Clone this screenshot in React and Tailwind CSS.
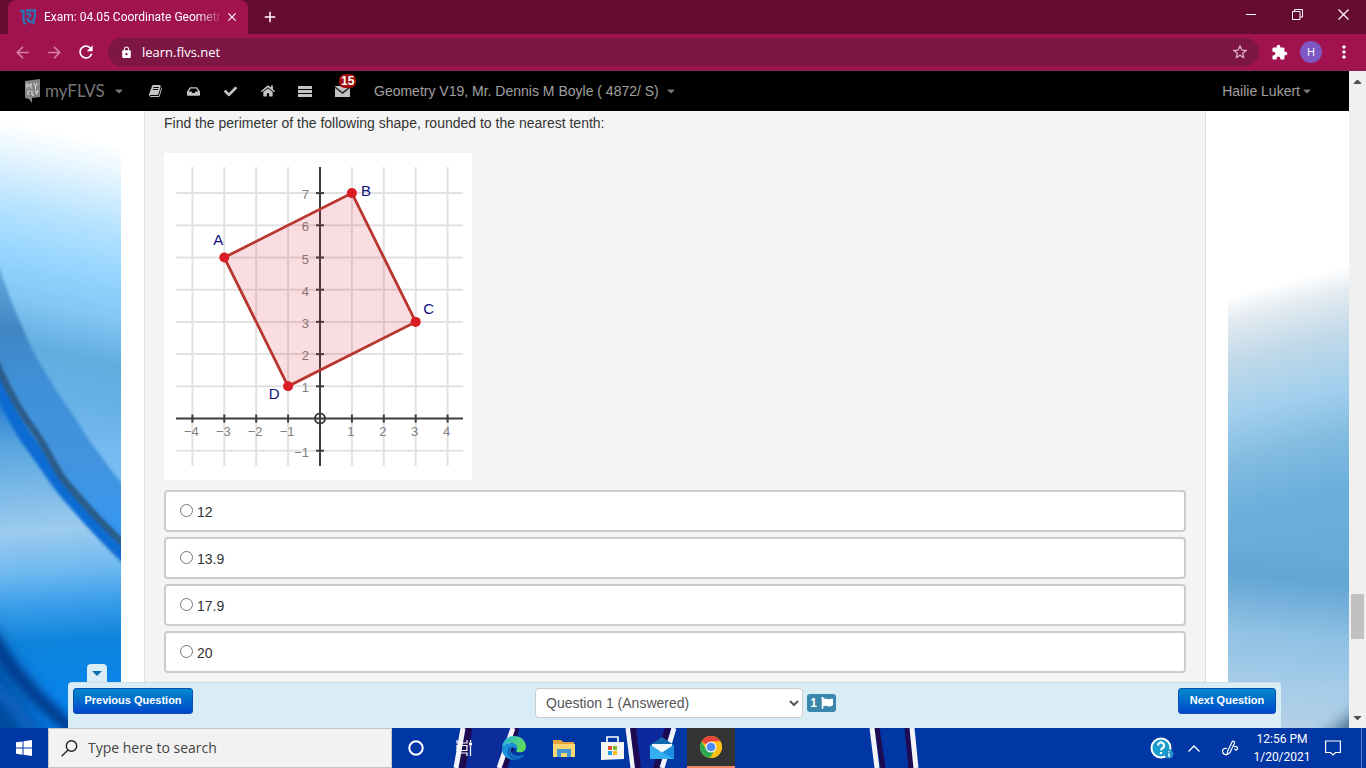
import React, { useState } from 'react'
import { FaInbox, FaCheck, FaHome, FaEnvelope, FaFlag, FaCaretDown, FaCaretUp } from 'react-icons/fa'
import {
  MdArrowBack,
  MdArrowForward,
  MdRefresh,
  MdLock,
  MdStarBorder,
  MdExtension,
  MdMoreVert,
  MdClose,
  MdAdd,
} from 'react-icons/md'

const ANSWERS = ['12', '13.9', '17.9', '20']

// Graph scale: origin in svg units and pixels per grid unit
const OX = 156
const OY = 265.5
const UX = 31.9
const UY = 32.2
const px = (x) => OX + x * UX
const py = (y) => OY - y * UY

const POINTS = [
  { name: 'A', x: -3, y: 5, dx: -6, dy: -13 },
  { name: 'B', x: 1, y: 7, dx: 14, dy: 3 },
  { name: 'C', x: 3, y: 3, dx: 13, dy: -8 },
  { name: 'D', x: -1, y: 1, dx: -14, dy: 13 },
]

function TabStrip() {
  return (
    <div className="flex h-[34px] shrink-0 items-stretch bg-[#660b30] pl-2 text-white">
      <div className="flex w-[240px] items-center rounded-t-lg bg-[#a0134f] pr-2 pl-3">
        <svg width="16" height="16" viewBox="0 0 16 16" className="mr-2 shrink-0" fill="none" stroke="#2a74b4" strokeWidth="2.4">
          <path d="M0 2h3.500v9c0 2 .5 3 2.500 4M6 1.500h9v8M6 5.500c3-2 6 0 3 3M7 9c1 3 3 4 5 4M13.500 9v6" />
        </svg>
        <span className="flex-1 mask-r-from-85% font-['Roboto',sans-serif] text-xs leading-4 whitespace-nowrap">
          Exam: 04.05 Coordinate Geometr
        </span>
        <button aria-label="Close tab" className="flex w-4 justify-center">
          <MdClose size={14} />
        </button>
      </div>
      <button aria-label="New tab" className="ml-3 flex w-5 items-center justify-center">
        <MdAdd size={18} />
      </button>
      <div className="flex-1" />
      <button aria-label="Minimize" className="flex w-[46px] items-center justify-center pb-1.5">
        <svg width="10" height="10" stroke="currentColor">
          <path d="M0 5.500h10" />
        </svg>
      </button>
      <button aria-label="Restore" className="flex w-[46px] items-center justify-center pb-1.5">
        <svg width="11" height="11" fill="none" stroke="currentColor">
          <path d="M.5 2.500h7.500v8H.5zM2.500 2.500v-2h8v7.500H8" />
        </svg>
      </button>
      <button aria-label="Close" className="flex w-[46px] items-center justify-center pb-1.5">
        <svg width="11" height="11" stroke="currentColor" strokeWidth="1.2">
          <path d="M.5.5l10 10M10.500.5l-10 10" />
        </svg>
      </button>
    </div>
  )
}

function Toolbar() {
  return (
    <div className="flex h-[37px] shrink-0 items-center border-b border-[#8a2450] bg-[#a0134f] px-3 text-white">
      <button aria-label="Back" className="flex w-5 justify-center text-[#d680a4]">
        <MdArrowBack size={19} />
      </button>
      <button aria-label="Forward" className="ml-3 flex w-5 justify-center text-[#d680a4]">
        <MdArrowForward size={19} />
      </button>
      <button aria-label="Reload" className="ml-3 flex w-5 justify-center">
        <MdRefresh size={20} />
      </button>
      <div className="ml-3 flex h-7 flex-1 items-center rounded-full bg-[#7d1644] pr-2.5 pl-3">
        <MdLock size={13} />
        <input
          aria-label="Address"
          defaultValue="learn.flvs.net"
          className="ml-2 flex-1 bg-transparent pl-px text-[13px] leading-5 outline-none"
        />
        <button aria-label="Bookmark">
          <MdStarBorder size={18} className="text-[#e2b8ca]" />
        </button>
      </div>
      <button aria-label="Extensions" className="ml-3">
        <MdExtension size={17} />
      </button>
      <button className="ml-3 h-[22px] w-[22px] rounded-full bg-[#7e57c2] text-[11px]">H</button>
      <button aria-label="Menu" className="ml-3 flex w-5 justify-center">
        <MdMoreVert size={20} />
      </button>
    </div>
  )
}

function BookIcon() {
  return (
    <svg width="14" height="14" viewBox="0 0 1792 1792" fill="currentColor">
      <path d="M1639 478q40 57 18 129l-275 906q-19 64-76.500 107.500t-122.500 43.500h-923q-77 0-148.500-53.500t-99.500-131.500q-24-67-2-127 0-4 3-27t4-37q1-8-3-21.500t-3-19.500q2-11 8-21t16.500-23.500 16.500-23.500q23-38 45-91.500t30-91.500q3-10 .5-30t-.5-28q3-11 17-28t17-23q21-36 42-92t25-90q1-9-2.500-32t.5-28q4-13 22-30.500t22-22.500q19-26 42.500-84.500t27.500-96.500q1-8-3-25.500t-2-26.500q2-8 9-18t18-23 17-21q8-12 16.500-30.500t15-35 16-36 19.500-32 26.500-23.500 36-11.500 47.500 5.500l-1 3q38-9 51-9h761q74 0 114 56t18 130l-274 906q-36 119-71.500 153.500t-128.500 34.500h-869q-27 0-38 15-11 16-1 43 24 70 144 70h923q29 0 56-15.500t35-41.500l300-987q7-22 5-57 38 15 59 43zm-1064 2q-4 13 2 22.500t20 9.500h608q13 0 25.500-9.500t16.500-22.500l21-64q4-13-2-22.500t-20-9.500h-608q-13 0-25.500 9.500t-16.500 22.500zm-83 256q-4 13 2 22.500t20 9.500h608q13 0 25.500-9.500t16.500-22.500l21-64q4-13-2-22.500t-20-9.500h-608q-13 0-25.500 9.500t-16.500 22.500z" />
    </svg>
  )
}

function NavBar() {
  return (
    <nav className="flex h-10 shrink-0 items-center bg-black pr-9 pl-6 font-['Liberation_Sans',sans-serif] text-sm text-[#a0a0a0]">
      <a href="#home" className="flex w-[113px] items-center">
        <svg width="17" height="26" viewBox="0 0 17 26" className="mr-1 shrink-0">
          <path d="M1 3l15-2v18l-8 1v5l-3-4-4-1z" fill="#858585" />
          <path d="M3 5.500v5M3 5.500l2 3 2-3v5M10 5l1.500 3L13.500 5M11.500 8v3M4 13v4M4 13h2.500M8 12.500V17h2M11.500 12l1 4 1.500-4" fill="none" stroke="#ddd" />
        </svg>
        <span className="font-['Lato',sans-serif] text-[17px] leading-5 text-[#777]">myFLVS</span>
        <FaCaretDown size={12} className="ml-2 text-[#777]" />
      </a>
      <div className="flex items-center text-[#c4c4c4]">
        <a href="#book" aria-label="Lessons" className="flex w-[38px] justify-center">
          <BookIcon />
        </a>
        <a href="#inbox" aria-label="Dropbox" className="flex w-[37px] justify-center">
          <FaInbox size={13} />
        </a>
        <a href="#grades" aria-label="Grades" className="flex w-[37px] justify-center">
          <FaCheck size={13} />
        </a>
        <a href="#course" aria-label="Course home" className="flex w-[37px] justify-center">
          <FaHome size={14} />
        </a>
        <a href="#list" aria-label="List" className="flex w-[37px] justify-center">
          <svg width="14" height="11" fill="currentColor">
            <path d="M0 0h14v3H0zM0 4h14v3H0zM0 8h14v3H0z" />
          </svg>
        </a>
        <a href="#mail" aria-label="Messages" className="relative flex w-[39px] justify-center">
          <svg width="15" height="11">
            <path d="M0 0h15v11H0z" fill="#c4c4c4" />
            <path d="M0 1l7.500 6L15 1" fill="none" stroke="#222" strokeWidth="1.400" />
          </svg>
          <span className="absolute -top-3 left-4 rounded-md bg-[#a00c0c] px-0.5 py-px text-xs leading-3 font-bold text-white">
            15
          </span>
        </a>
      </div>
      <a href="#class" className="ml-3 flex items-center">
        Geometry V19, Mr. Dennis M Boyle ( 4872/ S)
        <FaCaretDown size={12} className="ml-1.5 text-[#777]" />
      </a>
      <a href="#user" className="ml-auto flex items-center">
        Hailie Lukert
        <FaCaretDown size={12} className="ml-px text-[#777]" />
      </a>
    </nav>
  )
}

function LeftWallpaper() {
  return (
    <svg className="h-full w-[121px] shrink-0" viewBox="0 0 121 617" preserveAspectRatio="none">
      <defs>
        <linearGradient id="sky" gradientUnits="userSpaceOnUse" x1="60" y1="22" x2="-20" y2="400">
          <stop offset="0" stopColor="#fff" />
          <stop offset="0.08" stopColor="#e6f5ff" />
          <stop offset="0.2" stopColor="#bae4ff" />
          <stop offset="0.33" stopColor="#96d6ff" />
          <stop offset="0.44" stopColor="#84c6f4" />
          <stop offset="0.56" stopColor="#60addf" />
          <stop offset="0.66" stopColor="#66b0e6" />
          <stop offset="0.8" stopColor="#78bcf2" />
        </linearGradient>
        <linearGradient id="band" gradientUnits="userSpaceOnUse" x1="0" y1="150" x2="0" y2="440">
          <stop offset="0" stopColor="#68aede" />
          <stop offset="0.24" stopColor="#3f86c4" />
          <stop offset="0.42" stopColor="#4090d8" />
          <stop offset="0.7" stopColor="#4294de" />
          <stop offset="0.9" stopColor="#3696ee" />
        </linearGradient>
        <linearGradient id="lower" gradientUnits="userSpaceOnUse" x1="20" y1="290" x2="40" y2="600">
          <stop offset="0" stopColor="#2a7ed0" />
          <stop offset="0.15" stopColor="#5aa6e0" />
          <stop offset="0.42" stopColor="#9ccbee" />
          <stop offset="0.55" stopColor="#70b9f0" />
          <stop offset="0.66" stopColor="#3a9eea" />
          <stop offset="0.78" stopColor="#0e84dc" />
          <stop offset="1" stopColor="#0684ee" />
        </linearGradient>
        <filter id="soft2" x="-20%" y="-20%" width="140%" height="140%">
          <feGaussianBlur stdDeviation="1.500" />
        </filter>
        <filter id="soft5" x="-50%" y="-50%" width="200%" height="200%">
          <feGaussianBlur stdDeviation="5" />
        </filter>
        <filter id="soft16" x="-50%" y="-50%" width="200%" height="200%">
          <feGaussianBlur stdDeviation="14" />
        </filter>
      </defs>
      <rect width="121" height="617" fill="url(#sky)" />
      <path d="M-8 136C0 158 8 184 17 204S32 240 42 256 58 283 67 295 88 329 97 340 112 363 135 386V460L-8 300z" fill="url(#band)" filter="url(#soft2)" />
      <path d="M-8 270C6 302 18 325 33 346S56 381 67 393 100 432 135 464V650H-8z" fill="url(#lower)" />
      <path d="M-8 258C6 294 18 316 33 336S56 371 67 383 100 422 135 455" fill="none" stroke="#0a6cd4" strokeWidth="13" filter="url(#soft2)" />
      <path d="M-8 242C6 276 18 298 33 318S56 361 67 373 100 413 135 443" fill="none" stroke="#2a5c88" strokeWidth="7" filter="url(#soft2)" />
      <path d="M-40 485C0 540 30 600 60 660H-40z" fill="#04489c" filter="url(#soft16)" />
      <path d="M-12 520C10 560 40 592 80 625" fill="none" stroke="#033a8c" strokeWidth="14" filter="url(#soft5)" />
      <path d="M-8 572C5 585 18 600 34 622" fill="none" stroke="#0b62c0" strokeWidth="12" filter="url(#soft5)" />
    </svg>
  )
}

function RightWallpaper() {
  return (
    <svg className="h-full w-[121px] shrink-0" viewBox="0 0 121 617" preserveAspectRatio="none">
      <defs>
        {/* slanted horizon: lower on the left than on the right */}
        <linearGradient id="haze" gradientUnits="userSpaceOnUse" x1="60" y1="170" x2="150" y2="520">
          <stop offset="0" stopColor="#fff" />
          <stop offset="0.07" stopColor="#e2eaf0" />
          <stop offset="0.18" stopColor="#c0d9e9" />
          <stop offset="0.32" stopColor="#a2cfed" />
          <stop offset="0.45" stopColor="#82bce0" />
          <stop offset="0.6" stopColor="#6aaedc" />
          <stop offset="1" stopColor="#66a8d6" />
        </linearGradient>
        <linearGradient id="ground" gradientUnits="userSpaceOnUse" x1="70" y1="430" x2="50" y2="617">
          <stop offset="0" stopColor="#66a8d6" stopOpacity="0" />
          <stop offset="0.2" stopColor="#62a5d4" />
          <stop offset="0.5" stopColor="#8fc1e4" />
          <stop offset="0.8" stopColor="#a8cde9" />
          <stop offset="1" stopColor="#b4d0e6" />
        </linearGradient>
        <filter id="soft8" x="-50%" y="-50%" width="200%" height="200%">
          <feGaussianBlur stdDeviation="8" />
        </filter>
      </defs>
      <rect width="121" height="617" fill="url(#haze)" />
      <path d="M0 430H121V617H0z" fill="url(#ground)" />
      <path d="M80 640L140 590V640z" fill="#4a7192" filter="url(#soft8)" />
    </svg>
  )
}

function Graph() {
  const xs = [-4, -3, -2, -1, 1, 2, 3, 4]
  const ys = [-1, 1, 2, 3, 4, 5, 6, 7]
  return (
    <svg width="308" height="327" className="mt-5 bg-white font-['Liberation_Sans',sans-serif]" role="img" aria-label="Square ABCD on a coordinate grid">
      <g stroke="#e2e2e2" strokeWidth="2">
        {xs.map((x) => (
          <path key={x} d={`M${px(x)} 14V313`} />
        ))}
        {ys.map((y) => (
          <path key={y} d={`M12 ${py(y)}H299`} />
        ))}
      </g>
      <g stroke="#3c3c3c" strokeWidth="2">
        <path d={`M12 ${OY}H299M${OX} 14V313`} />
        {xs.map((x) => (
          <path key={x} d={`M${px(x)} ${OY - 4}v8`} />
        ))}
        {ys.map((y) => (
          <path key={y} d={`M${OX - 4} ${py(y)}h8`} />
        ))}
        <circle cx={OX} cy={OY} r="5" fill="none" />
      </g>
      <g fill="#808080" fontSize="13">
        {xs.map((x) => (
          <text key={x} x={px(x) - 1} y="283" textAnchor="middle">
            {String(x).replace('-', '−')}
          </text>
        ))}
        {ys.map((y) => (
          <text key={y} x="145" y={py(y) + 6} textAnchor="end">
            {String(y).replace('-', '−')}
          </text>
        ))}
      </g>
      <polygon
        points={POINTS.map((p) => `${px(p.x)},${py(p.y)}`).join(' ')}
        fill="#d81e2c"
        fillOpacity="0.15"
        stroke="#b8362e"
        strokeWidth="2.8"
      />
      {POINTS.map((p) => (
        <g key={p.name}>
          <circle cx={px(p.x)} cy={py(p.y)} r="5" fill="#d81e24" />
          <text x={px(p.x) + p.dx} y={py(p.y) + p.dy} textAnchor="middle" fontSize="15" fill="#10107c">
            {p.name}
          </text>
        </g>
      ))}
    </svg>
  )
}

function QuestionBar() {
  const buttonClass =
    'h-[26px] rounded-[3px] border border-[#0a50b8] bg-linear-to-b from-[#0088cc] to-[#0044cc] text-[11px] font-bold text-white'
  return (
    <div className="absolute inset-x-[68px] bottom-0">
      <button aria-label="Hide bar" className="ml-[19px] flex h-[18px] w-5 items-center justify-center rounded-t-[4px] bg-[#d9edf7]">
        <svg width="10" height="5" fill="#0a72b0">
          <path d="M0 0h10L5 5z" />
        </svg>
      </button>
      <div className="flex h-[46px] items-start justify-between rounded-t-[4px] border-t border-[#c8e2ec] bg-[#d9edf7] px-[5px] pt-[5px]">
        <button className={`w-[120px] ${buttonClass}`}>Previous Question</button>
        <div className="flex items-center gap-1">
          <select
            aria-label="Question"
            className="h-[30px] w-[268px] rounded-[4px] border border-[#ccc] bg-white pl-1.5 text-sm text-[#555]"
          >
            <option>Question 1 (Answered)</option>
          </select>
          <span className="flex h-[18px] w-[29px] items-center justify-center gap-1 rounded-[3px] bg-[#3a87ad] text-xs font-bold text-white">
            1
            <FaFlag size={12} />
          </span>
        </div>
        <button className={`w-[98px] ${buttonClass}`}>Next Question</button>
      </div>
    </div>
  )
}

function ExamPage() {
  const [answer, setAnswer] = useState(null)
  return (
    <main className="relative flex min-h-0 flex-1 overflow-hidden bg-white font-['Liberation_Sans',sans-serif] text-sm text-[#333]">
      <LeftWallpaper />
      <div className="flex-1 pr-[22px] pl-[23px]">
        <div className="h-full border-x border-[#e0e0e0] bg-[#f4f4f4] px-[19px] pt-0.5">
          <p className="leading-5">Find the perimeter of the following shape, rounded to the nearest tenth:</p>
          <Graph />
          <div className="mt-2.5 flex flex-col gap-[5px]">
            {ANSWERS.map((a) => (
              <label key={a} className="flex h-[42px] items-center gap-1 rounded-[4px] border-2 border-[#ccc] bg-white pl-3.5">
                <input
                  type="radio"
                  name="answer"
                  className="mb-0.5 h-[13px] w-[13px]"
                  checked={answer === a}
                  onChange={() => setAnswer(a)}
                />
                <span className="pt-0.5 leading-5">{a}</span>
              </label>
            ))}
          </div>
        </div>
      </div>
      <RightWallpaper />
      <QuestionBar />
    </main>
  )
}

function Scrollbar() {
  return (
    <div className="flex w-[17px] shrink-0 flex-col items-center bg-[#f0f0f0] text-[#505050]">
      <FaCaretUp size={13} className="my-1" />
      <div className="grow-[503]" />
      <div className="h-[45px] w-[13px] bg-[#c1c1c1]" />
      <div className="grow-[68]" />
      <FaCaretDown size={13} className="my-1" />
    </div>
  )
}

function EdgeIcon() {
  return (
    <svg width="26" height="26" viewBox="0 0 24 24">
      <defs>
        <linearGradient id="edgeTop" x1="0" y1="0" x2="1" y2="0.4">
          <stop offset="0" stopColor="#28b2e8" />
          <stop offset="1" stopColor="#5fdc5c" />
        </linearGradient>
      </defs>
      <path d="M1 13C1 5 6 1 12 1c7 0 11 5 11 9.500 0 3.500-2.500 5.500-6 5.500-2.500 0-3.500-1-2.500-2.500C16 10 13 7.500 9.500 7.500 5 7.500 1.500 10 1 13z" fill="url(#edgeTop)" />
      <path d="M1 13c.5-3.500 4-5.500 8.500-5.500 3.500 0 6 2.500 5 5.500-.8-1-2-1.500-3.500-1.500-2 1-2.500 3.500-1 5.500 2.500 3 7 3 11.500 1C19 21.500 15.500 23 12 23 5.500 23 1 18.500 1 13z" fill="#1890dc" />
      <path d="M11 11.500C8 12 7.500 17 10.500 19c3 1.800 7 1.700 10.500-1-1.500 3-5 5-9 5-4-1-6.500-4.500-6-8.500.5-2.500 2.500-4 5-3z" fill="#0f62b8" />
    </svg>
  )
}

function ChromeIcon() {
  return (
    <svg width="24" height="24" viewBox="0 0 24 24">
      <circle cx="12" cy="12" r="11" fill="#fbc116" />
      <path d="M12 12L2.500 6.500A11 11 0 0 1 21.500 6.500H12z" fill="#e8453c" />
      <path d="M2.500 6.500A11 11 0 0 0 11 23l5.500-9L12 12 7 14z" fill="#2da94f" />
      <path d="M21.500 6.500H12L17 14l-6 9A11 11 0 0 0 21.500 6.500z" fill="#fbc116" />
      <circle cx="12" cy="12" r="5.500" fill="#f4f4f4" />
      <circle cx="12" cy="12" r="4.300" fill="#4a8af4" />
    </svg>
  )
}

function TaskStreaks() {
  return (
    <svg className="absolute top-0 left-[392px] h-10 w-[540px]" viewBox="0 0 540 40" fill="none">
      <path d="M80 0h42l-12 40H70z" fill="#0c2c9c" />
      <path d="M242 0h32l-10 40h-16z" fill="#0c2a9e" />
      <path d="M77 0l-7 40M124 0l-12 40" stroke="#1e0a50" strokeWidth="7" />
      <path d="M71 0l-7 40M121 0l-14 40M236 0l5 40M282 0l-12 40" stroke="#f4f4f8" strokeWidth="5" />
      <path d="M241 0l5 40M276 0l-12 40" stroke="#1e0a50" strokeWidth="6" />
      <path d="M485 0l6 40M515 0l4 40" stroke="#1e0a50" strokeWidth="5" />
      <path d="M480 0l5 40M520 0l4 40" stroke="#f4f4f8" strokeWidth="5" />
    </svg>
  )
}

function Taskbar() {
  return (
    <footer className="relative flex h-10 shrink-0 bg-[#0037a4] text-white">
      <TaskStreaks />
      <button aria-label="Start" className="flex w-12 items-center justify-center">
        <svg width="16" height="16" fill="#fff">
          <path d="M0 2.300L6.500 1.400V7.600H0zM7.500 1.200L16 0v7.600H7.500zM0 8.500h6.500v6.200L0 13.800zM7.500 8.500H16V16l-8.500-1.200z" />
        </svg>
      </button>
      <label className="flex w-[344px] items-center border border-[#c4c4c4] bg-[#f2f2f2] pl-3 text-[#333]">
        <svg width="17" height="17" fill="none" stroke="#222" strokeWidth="1.400">
          <circle cx="10.500" cy="6" r="5.200" />
          <path d="M7 10L.7 16.300" />
        </svg>
        <input
          aria-label="Search"
          placeholder="Type here to search"
          className="ml-2.5 flex-1 bg-transparent text-sm placeholder-[#444] outline-none"
        />
      </label>
      <div className="relative flex">
        <button aria-label="Cortana" className="flex w-12 items-center justify-center">
          <svg width="16" height="16" fill="none" stroke="#fff" strokeWidth="2">
            <circle cx="8" cy="8" r="6.700" />
          </svg>
        </button>
        <button aria-label="Task view" className="flex w-[49px] items-center justify-center">
          <svg width="17" height="16" fill="none" stroke="#fff" strokeWidth="1.200">
            <path d="M1 0v3h10V0M1 16v-3h10v3M1 5.500h10v5H1zM14.500 0v2M14.500 6v10" />
            <path d="M13.500 3h2v2h-2z" fill="#fff" />
          </svg>
        </button>
        <button aria-label="Edge" className="flex w-[50px] items-center justify-center">
          <EdgeIcon />
        </button>
        <button aria-label="File Explorer" className="flex w-[49px] items-center justify-center">
          <svg width="22" height="19">
            <path d="M0 1h8l2 2h11v15H0z" fill="#e8a33a" />
            <path d="M0 5h22v13H0z" fill="#fcd673" />
            <path d="M4 18v-8h14v8h-4v-4H8v4z" fill="#4495d4" />
          </svg>
        </button>
        <button aria-label="Store" className="flex w-[49px] items-center justify-center">
          <svg width="24" height="24">
            <path d="M6 7V1h11v6" fill="none" stroke="#fff" strokeWidth="1.600" />
            <path d="M0 6h23v17l-23 1z" fill="#f6f6f6" />
            <path d="M7 10h4v4H7z" fill="#e8502c" />
            <path d="M12 10h4v4h-4z" fill="#7db72f" />
            <path d="M7 15h4v4H7z" fill="#22a0e4" />
            <path d="M12 15h4v4h-4z" fill="#f8b81c" />
          </svg>
        </button>
        <button aria-label="Mail" className="flex w-[50px] items-center justify-center">
          <svg width="24" height="22">
            <path d="M0 8l12-8 12 8v4H0z" fill="#1468b0" />
            <path d="M0 8l12 7 12-7v14H0z" fill="#35aef0" />
            <path d="M24 8v14L9 13.500l3 1.500z" fill="#1f8fe0" />
            <path d="M2 7h20v2l-10 6.500L2 9z" fill="#f2f8fc" />
          </svg>
        </button>
        <button aria-label="Chrome" className="flex w-12 items-center justify-center border-b-2 border-[#f0866a] bg-[#333]">
          <ChromeIcon />
        </button>
      </div>
      <div className="ml-auto flex items-center">
        <button aria-label="Help" className="flex w-6 justify-center">
          <svg width="24" height="24">
            <circle cx="11" cy="12" r="9.500" fill="#1a9ccc" stroke="#fff" strokeWidth="2" />
            <path d="M8 9.500a3 3 0 1 1 4.500 2.600c-1 .6-1.400 1-1.400 2.200M11 16v2" fill="none" stroke="#fff" strokeWidth="2.200" />
            <circle cx="19" cy="18" r="4.500" fill="#1d90c8" />
            <path d="M19 15v1.200M19 17.200V21" stroke="#fff" strokeWidth="1.400" />
          </svg>
        </button>
        <button aria-label="Hidden icons" className="ml-3.5 flex w-3">
          <svg width="12" height="7" fill="none" stroke="#fff" strokeWidth="1.400">
            <path d="M.5 6.500l5.500-5.500 5.500 5.500" />
          </svg>
        </button>
        <button aria-label="Pen" className="ml-[22px] flex w-[17px]">
          <svg width="17" height="17" fill="none" stroke="#fff" strokeWidth="1.200">
            <path d="M5.500 11.500L10 2c1-1.500 3-.5 2.500 1L8 12.500l-3 2zM5 8.500C1 8 0 10 .8 12.500c.8 2.500 4 2.500 5.500 1.500M12 6.500c3-.5 4.500 1 3 3-1 1-2.500.5-2-1" />
          </svg>
        </button>
        <div className="ml-2.5 w-[66px] text-center font-['Roboto',sans-serif] text-xs leading-[18px]">
          <div>12:56 PM</div>
          <div>1/20/2021</div>
        </div>
        <button aria-label="Notifications" className="mr-5 ml-2.5 flex w-4">
          <svg width="16" height="17" fill="none" stroke="#fff" strokeWidth="1.200">
            <path d="M.6 1h14.800v11.500H10.500L8 15l-2.500-2.500H.6z" />
          </svg>
        </button>
        <div className="h-10 w-[5px] border-l border-[#5c7cc4]" />
      </div>
    </footer>
  )
}

export default function App() {
  return (
    <div className="flex h-screen flex-col overflow-hidden font-['Open_Sans',sans-serif]">
      <TabStrip />
      <Toolbar />
      <div className="flex min-h-0 flex-1">
        <div className="flex min-w-0 flex-1 flex-col">
          <NavBar />
          <ExamPage />
        </div>
        <Scrollbar />
      </div>
      <Taskbar />
    </div>
  )
}
